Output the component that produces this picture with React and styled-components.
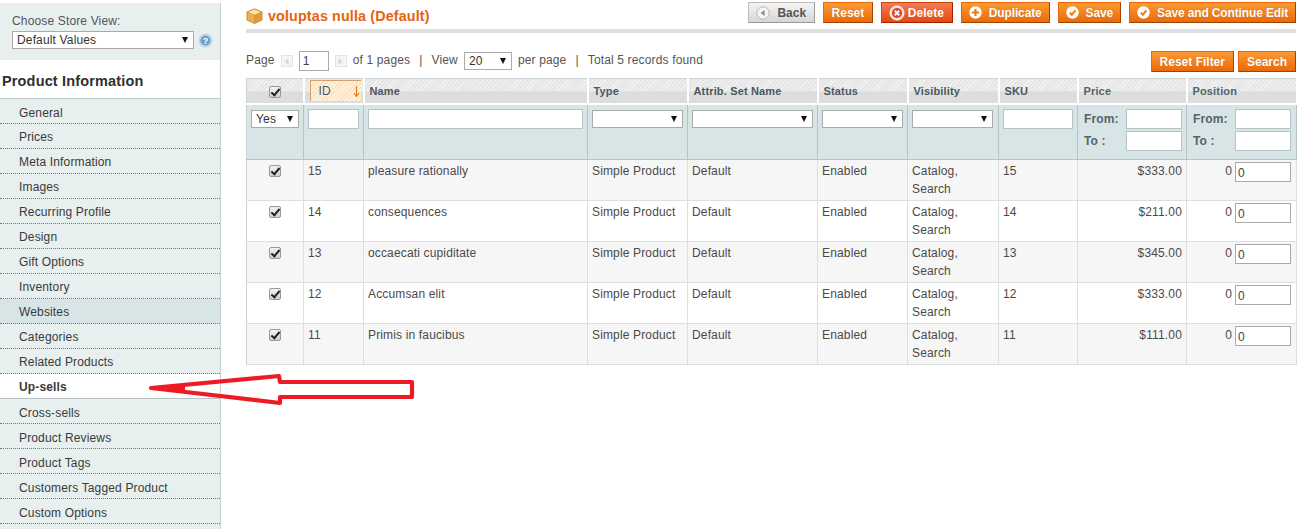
import React from "react";
import styled, { createGlobalStyle } from "styled-components";

const GlobalStyle = createGlobalStyle`
  html, body {
    margin: 0;
    padding: 0;
    background: #fff;
    overflow: hidden;
  }
  body {
    font: 12px/18px "Liberation Sans", Arial, sans-serif;
    letter-spacing: 0.15px;
    color: #4a4a4a;
  }
`;

const tabs = [
  "General", "Prices", "Meta Information", "Images", "Recurring Profile", "Design",
  "Gift Options", "Inventory", "Websites", "Categories", "Related Products", "Up-sells",
  "Cross-sells", "Product Reviews", "Product Tags", "Customers Tagged Product", "Custom Options",
];

const rows = [
  { id: 15, name: "pleasure rationally", price: "$333.00" },
  { id: 14, name: "consequences", price: "$211.00" },
  { id: 13, name: "occaecati cupiditate", price: "$345.00" },
  { id: 12, name: "Accumsan elit", price: "$333.00" },
  { id: 11, name: "Primis in faucibus", price: "$111.00" },
];

const columns = [57, 60, 224, 100, 130, 90, 91, 79, 109, 110];

const BoxIcon = () => (
  <svg width="17" height="16" viewBox="0 0 17 16">
    <path d="M8.5 1 L16 4 V12 L8.5 15.5 L1 12 V4 Z" fill="#eeb04e" stroke="#c98a2c" strokeWidth="1" />
    <path d="M1 4 L8.5 7.2 L16 4 L8.5 1 Z" fill="#fbe3a6" stroke="#c98a2c" strokeWidth="0.7" />
    <path d="M8.5 7.2 V15.5" stroke="#c98a2c" strokeWidth="0.8" />
    <path d="M8.5 7.2 L16 4 V12 L8.5 15.5 Z" fill="#dd9a38" />
  </svg>
);

const HelpIcon = () => (
  <svg width="15" height="15" viewBox="0 0 15 15">
    <circle cx="7.5" cy="7.5" r="7" fill="#c3d9ea" />
    <circle cx="7.5" cy="7.5" r="5" fill="#6f9fc9" />
    <text x="7.5" y="10.6" fontSize="9" fontWeight="700" textAnchor="middle" fill="#fff" fontFamily="Liberation Sans">?</text>
  </svg>
);

const BackIcon = () => (
  <svg width="14" height="14" viewBox="0 0 14 14">
    <circle cx="7" cy="7" r="6.2" fill="#f5f5f5" stroke="#b5b5b5" />
    <path d="M8.6 4 V10 L4.6 7 Z" fill="#8a8a8a" />
  </svg>
);

const DeleteIcon = () => (
  <svg width="16" height="16" viewBox="0 0 16 16">
    <circle cx="8" cy="8" r="7" fill="#f9d9c9" stroke="#fff" strokeWidth="1" />
    <circle cx="8" cy="8" r="5" fill="#d8432a" />
    <path d="M5.8 5.8 L10.2 10.2 M10.2 5.8 L5.8 10.2" stroke="#fff" strokeWidth="2" />
  </svg>
);

const PlusIcon = () => (
  <svg width="13" height="13" viewBox="0 0 13 13">
    <circle cx="6.5" cy="6.5" r="6.2" fill="#fff" />
    <path d="M6.5 3 V10 M3 6.5 H10" stroke="#ee7a10" strokeWidth="2.2" />
  </svg>
);

const CheckIcon = () => (
  <svg width="13" height="13" viewBox="0 0 13 13">
    <circle cx="6.5" cy="6.5" r="6.2" fill="#fff" />
    <path d="M3.8 6.6 L5.8 8.8 L9.4 4.4" fill="none" stroke="#ee7a10" strokeWidth="2" />
  </svg>
);

const SortArrow = () => (
  <svg width="7" height="11" viewBox="0 0 7 11">
    <path d="M3.5 0 V10 M0.8 7 L3.5 10.5 L6.2 7" fill="none" stroke="#ea7a1c" strokeWidth="1.2" />
  </svg>
);

const PagerArrow = ({ dir }) => (
  <PagerBox>
    <svg width="5" height="7" viewBox="0 0 5 7">
      <path d={dir === "left" ? "M4.5 0.5 V6.5 L0.5 3.5 Z" : "M0.5 0.5 V6.5 L4.5 3.5 Z"} fill="#d4d4d4" />
    </svg>
  </PagerBox>
);

const Select = ({ value, width }) => (
  <SelectBox $width={width}>{value}</SelectBox>
);

const App = () => {
  return (
    <Page>
      <GlobalStyle />
      <Sidebar>
        <StoreSwitcher>
          <StoreLabel>Choose Store View:</StoreLabel>
          <StoreRow>
            <Select value="Default Values" width={182} />
            <HelpIcon />
          </StoreRow>
        </StoreSwitcher>
        <SideTitle>Product Information</SideTitle>
        <TabList>
          {tabs.map((tab) => (
            <Tab key={tab} $active={tab === "Up-sells"} $hover={tab === "Websites"}>
              {tab}
            </Tab>
          ))}
        </TabList>
      </Sidebar>

      <Main>
        <Header>
          <Title>
            <BoxIcon />
            voluptas nulla (Default)
          </Title>
          <Buttons>
            <GreyButton><BackIcon />Back</GreyButton>
            <ResetButton>Reset</ResetButton>
            <RedButton><DeleteIcon />Delete</RedButton>
            <IconButton><PlusIcon />Duplicate</IconButton>
            <IconButton><CheckIcon />Save</IconButton>
            <IconButton><CheckIcon />Save and Continue Edit</IconButton>
          </Buttons>
        </Header>

        <Pager>
          <PagerInfo>
            <PagerText>Page</PagerText>
            <PagerArrow dir="left" />
            <PageInput defaultValue="1" />
            <PagerArrow dir="right" />
            <PagerText>of 1 pages</PagerText>
            <Sep>|</Sep>
            <PagerText>View</PagerText>
            <Select value="20" width={48} />
            <PagerText>per page</PagerText>
            <Sep>|</Sep>
            <PagerText>Total 5 records found</PagerText>
          </PagerInfo>
          <PagerActions>
            <Button>Reset Filter</Button>
            <Button>Search</Button>
          </PagerActions>
        </Pager>

        <Grid>
          <colgroup>
            {columns.map((w, i) => <col key={i} style={{ width: w }} />)}
          </colgroup>
          <thead>
            <HeadRow>
              <HeadCell $center><Check /></HeadCell>
              <HeadCell>
                <SortBadge>ID<SortArrow /></SortBadge>
              </HeadCell>
              <HeadCell>Name</HeadCell>
              <HeadCell>Type</HeadCell>
              <HeadCell>Attrib. Set Name</HeadCell>
              <HeadCell>Status</HeadCell>
              <HeadCell>Visibility</HeadCell>
              <HeadCell>SKU</HeadCell>
              <HeadCell $plain>Price</HeadCell>
              <HeadCell $plain>Position</HeadCell>
            </HeadRow>
            <FilterRow>
              <FilterCell><FilterSelect><Select value="Yes" width={48} /></FilterSelect></FilterCell>
              <FilterCell><TextInput /></FilterCell>
              <FilterCell><TextInput /></FilterCell>
              <FilterCell><FilterSelect><Select value="" width={91} /></FilterSelect></FilterCell>
              <FilterCell><FilterSelect><Select value="" width={121} /></FilterSelect></FilterCell>
              <FilterCell><FilterSelect><Select value="" width={81} /></FilterSelect></FilterCell>
              <FilterCell><FilterSelect><Select value="" width={81} /></FilterSelect></FilterCell>
              <FilterCell><TextInput /></FilterCell>
              <FilterCell><RangeFilter /></FilterCell>
              <FilterCell><RangeFilter /></FilterCell>
            </FilterRow>
          </thead>
          <tbody>
            {rows.map((row, i) => (
              <BodyRow key={row.id} $odd={i % 2 === 0}>
                <BodyCell $center><Check /></BodyCell>
                <BodyCell>{row.id}</BodyCell>
                <BodyCell>{row.name}</BodyCell>
                <BodyCell>Simple Product</BodyCell>
                <BodyCell>Default</BodyCell>
                <BodyCell>Enabled</BodyCell>
                <BodyCell>Catalog,<br />Search</BodyCell>
                <BodyCell>{row.id}</BodyCell>
                <BodyCell $right>{row.price}</BodyCell>
                <BodyCell>
                  <PositionWrap>0<PositionInput defaultValue="0" /></PositionWrap>
                </BodyCell>
              </BodyRow>
            ))}
          </tbody>
        </Grid>
      </Main>

      <RedArrow width="270" height="34" viewBox="0 0 270 34">
        <path d="M2 15 L36 11.5 L36 18.5 Z" fill="#ed1c24" stroke="#ed1c24" strokeWidth="2" />
        <path
          d="M3 15 L131 3 L132 9 L264 9 L264 24 L132 24 L132 30 Z"
          fill="none"
          stroke="#ed1c24"
          strokeWidth="4.2"
          strokeLinejoin="round"
        />
      </RedArrow>
    </Page>
  );
};

const RangeFilter = () => (
  <Range>
    <RangeRow>From:<RangeInput /></RangeRow>
    <RangeRow>To :<RangeInput /></RangeRow>
  </Range>
);

const Page = styled.div`
  position: relative;
  display: flex;
  align-items: stretch;
  height: 529px;
  overflow: hidden;
`;

const Sidebar = styled.aside`
  width: 220px;
  flex: none;
  margin: 3px 0 0;
  background: #e7efef;
  border-right: 1px solid #c6d0d0;
`;

const StoreSwitcher = styled.div`
  height: 57px;
  box-sizing: border-box;
  padding: 10px 6px 0 12px;
  color: #555;
`;

const StoreLabel = styled.div`
  line-height: 16px;
`;

const StoreRow = styled.div`
  display: flex;
  align-items: center;
  gap: 4px;
  margin-top: 2px;
`;

const SideTitle = styled.h3`
  margin: 0;
  height: 39px;
  box-sizing: border-box;
  padding: 12px 0 0 2px;
  background: #fff;
  border-bottom: 1px solid #bcc6c6;
  font-size: 14.5px;
  line-height: 18px;
  font-weight: 700;
  color: #2f2f2f;
`;

const TabList = styled.ul`
  list-style: none;
  margin: 0;
  padding: 0;
`;

const Tab = styled.li`
  height: 25px;
  box-sizing: border-box;
  padding: 5px 0 0 19px;
  line-height: 18px;
  color: #3a3a3a;
  border-bottom: ${(p) => (p.$active ? "1px solid #b7c2c2" : "1px dotted #6f7a7a")};
  background: ${(p) => (p.$active ? "#fff" : p.$hover ? "#d8e5e6" : "transparent")};
  font-weight: ${(p) => (p.$active ? 700 : 400)};

  &:nth-child(n + 2):nth-child(-n + 12) {
    padding-top: 4px;
  }
`;

const Main = styled.main`
  width: 1050px;
  flex: none;
  margin-left: 25px;
`;

const Header = styled.header`
  display: flex;
  justify-content: space-between;
  height: 27px;
  padding-top: 2px;
  border-bottom: 4px solid #dfdfdf;
`;

const Title = styled.h3`
  display: flex;
  align-items: center;
  gap: 5px;
  height: 27px;
  margin: 0;
  font-size: 14.3px;
  font-weight: 700;
  color: #e8620e;
`;

const Buttons = styled.div`
  display: flex;
  gap: 8px;
  align-items: flex-start;
`;

const Button = styled.button`
  display: inline-flex;
  align-items: center;
  justify-content: center;
  height: 21px;
  padding: 0 8px;
  border: 1px solid;
  border-color: #ed6502 #a04300 #a04300 #ed6502;
  background: linear-gradient(#f99a33, #ea6a0b);
  color: #fff;
  font: 700 12px/1 "Liberation Sans", Arial, sans-serif;
  text-shadow: 0 0 1px rgba(160, 70, 0, 0.5);
`;

const ResetButton = styled(Button)`
  padding: 0 7.5px;
`;

const IconButton = styled(Button)`
  gap: 7px;
  padding: 0 7px;
  letter-spacing: -0.14px;
`;

const GreyButton = styled(Button)`
  gap: 7px;
  padding: 0 8px 0 7px;
  border-color: #bbb #999 #999 #bbb;
  background: linear-gradient(#f4f4f4, #d6d6d6);
  color: #555;
  text-shadow: none;
`;

const RedButton = styled(Button)`
  gap: 3px;
  padding: 0 8px 0 7px;
  border-color: #d24403 #a92000 #a92000 #d24403;
  background: linear-gradient(#f57b55, #e24a0e);
`;

const Pager = styled.div`
  display: flex;
  justify-content: space-between;
  align-items: flex-start;
  height: 21px;
  margin-top: 18px;
  margin-bottom: 6px;
  color: #555;
`;

const PagerInfo = styled.div`
  display: flex;
  align-items: center;
  gap: 6px;
  height: 20px;
`;

const PagerText = styled.span`
  padding-bottom: 2px;
`;

const PagerActions = styled.div`
  display: flex;
  gap: 4px;
`;

const PagerBox = styled.span`
  display: inline-flex;
  align-items: center;
  justify-content: center;
  width: 10px;
  height: 10px;
  border: 1px solid #e4e4e4;
  background: #f5f5f5;
`;

const PageInput = styled.input`
  width: 30px;
  height: 20px;
  box-sizing: border-box;
  padding: 0 3px;
  border: 1px solid #aaa;
  font: 12px "Liberation Sans", Arial, sans-serif;
  color: #444;
`;

const Sep = styled(PagerText)`
  margin: 0 3px;
`;

const SelectBox = styled.div`
  position: relative;
  width: ${(p) => p.$width}px;
  height: 18px;
  box-sizing: border-box;
  padding-left: 4px;
  border: 1px solid #aaa;
  background: #fff;
  line-height: 16px;
  font-weight: 400;
  color: #333;

  &::after {
    content: "";
    position: absolute;
    right: 5px;
    top: 5px;
    border-style: solid;
    border-width: 6px 3.5px 0;
    border-color: #111 transparent transparent;
  }
`;

const FilterSelect = styled.div`
  margin-top: 1px;
`;

const Grid = styled.table`
  width: 1050px;
  table-layout: fixed;
  border-collapse: collapse;
  border: 1px solid #cbd3d4;
`;

const HeadRow = styled.tr`
  height: 25px;
`;

const HeadCell = styled.th`
  padding: 0 4px 0 5px;
  border-right: 2px solid #fff;
  border-bottom: 2px solid #fff;
  text-align: ${(p) => (p.$center ? "center" : "left")};
  font-size: 11px;
  line-height: 14px;
  font-weight: 700;
  color: ${(p) => (p.$plain ? "#56626a" : "#4c5860")};
  background:
    repeating-linear-gradient(135deg, rgba(255, 255, 255, 0.5) 0 1px, transparent 1px 3px) 0 0 / 100% 50% no-repeat,
    linear-gradient(#e6e6e6 50%, #dcdedd 50%);
`;

const SortBadge = styled.span`
  display: flex;
  align-items: center;
  justify-content: space-between;
  height: 20px;
  margin: 0 -2px 0 0;
  padding: 0 1px 0 8px;
  border: 1px solid #d9a06f;
  border-width: 1px 0 0 1px;
  font-size: 12px;
  font-weight: 400;
  background: repeating-linear-gradient(135deg, #fbe0bb 0 1px, #fdf0dc 1px 3px);
`;

const FilterRow = styled.tr`
  height: 56px;
`;

const FilterCell = styled.th`
  padding: 4px 4px 0 4px;
  vertical-align: top;
  border-right: 1px solid #b6c4c6;
  border-bottom: 1px solid #b6c4c6;
  background: repeating-conic-gradient(#d2e1e4 0 25%, #dbe8ea 0 50%) 0 0 / 2px 2px;
  font-weight: 700;
  text-align: left;
  color: #55626a;

  &:last-child {
    padding-right: 5px;
  }
`;

const TextInput = styled.input`
  display: block;
  width: 100%;
  height: 20px;
  box-sizing: border-box;
  border: 1px solid #b6c4c6;
  background: #fff;
`;

const Range = styled.div`
  display: flex;
  flex-direction: column;
  gap: 2px;
`;

const RangeRow = styled.div`
  display: flex;
  align-items: center;
  justify-content: space-between;
  padding-left: 2px;
`;

const RangeInput = styled(TextInput)`
  width: 56px;
`;

const BodyRow = styled.tr`
  height: 41px;
  background: ${(p) => (p.$odd ? "#f6f6f6" : "#fff")};
`;

const BodyCell = styled.td`
  padding: 2px 4px;
  vertical-align: top;
  border-right: 1px solid #dadfe0;
  border-bottom: 1px solid #dadfe0;
  text-align: ${(p) => (p.$center ? "center" : p.$right ? "right" : "left")};

  &:last-child {
    padding-right: 5px;
  }
`;

const PositionWrap = styled.div`
  display: flex;
  justify-content: flex-end;
  gap: 3px;
`;

const PositionInput = styled(TextInput)`
  width: 56px;
  padding: 2px 2px 0;
  border-color: #aaa;
  font: 12px "Liberation Sans", Arial, sans-serif;
  color: #444;
`;

const Check = styled.input.attrs({ type: "checkbox", defaultChecked: true })`
  appearance: none;
  position: relative;
  display: inline-block;
  width: 12px;
  height: 12px;
  margin: 3px 0 0;
  border: 1px solid #9a9a9a;
  border-radius: 2px;
  background: linear-gradient(#f3f3f3, #cfcfcf);
  vertical-align: top;

  &::after {
    content: "";
    position: absolute;
    left: 3px;
    top: 0;
    width: 3px;
    height: 7px;
    border: solid #222;
    border-width: 0 2px 2px 0;
    transform: rotate(40deg);
  }
`;

const RedArrow = styled.svg`
  position: absolute;
  left: 148px;
  top: 373px;
`;

export default App;
